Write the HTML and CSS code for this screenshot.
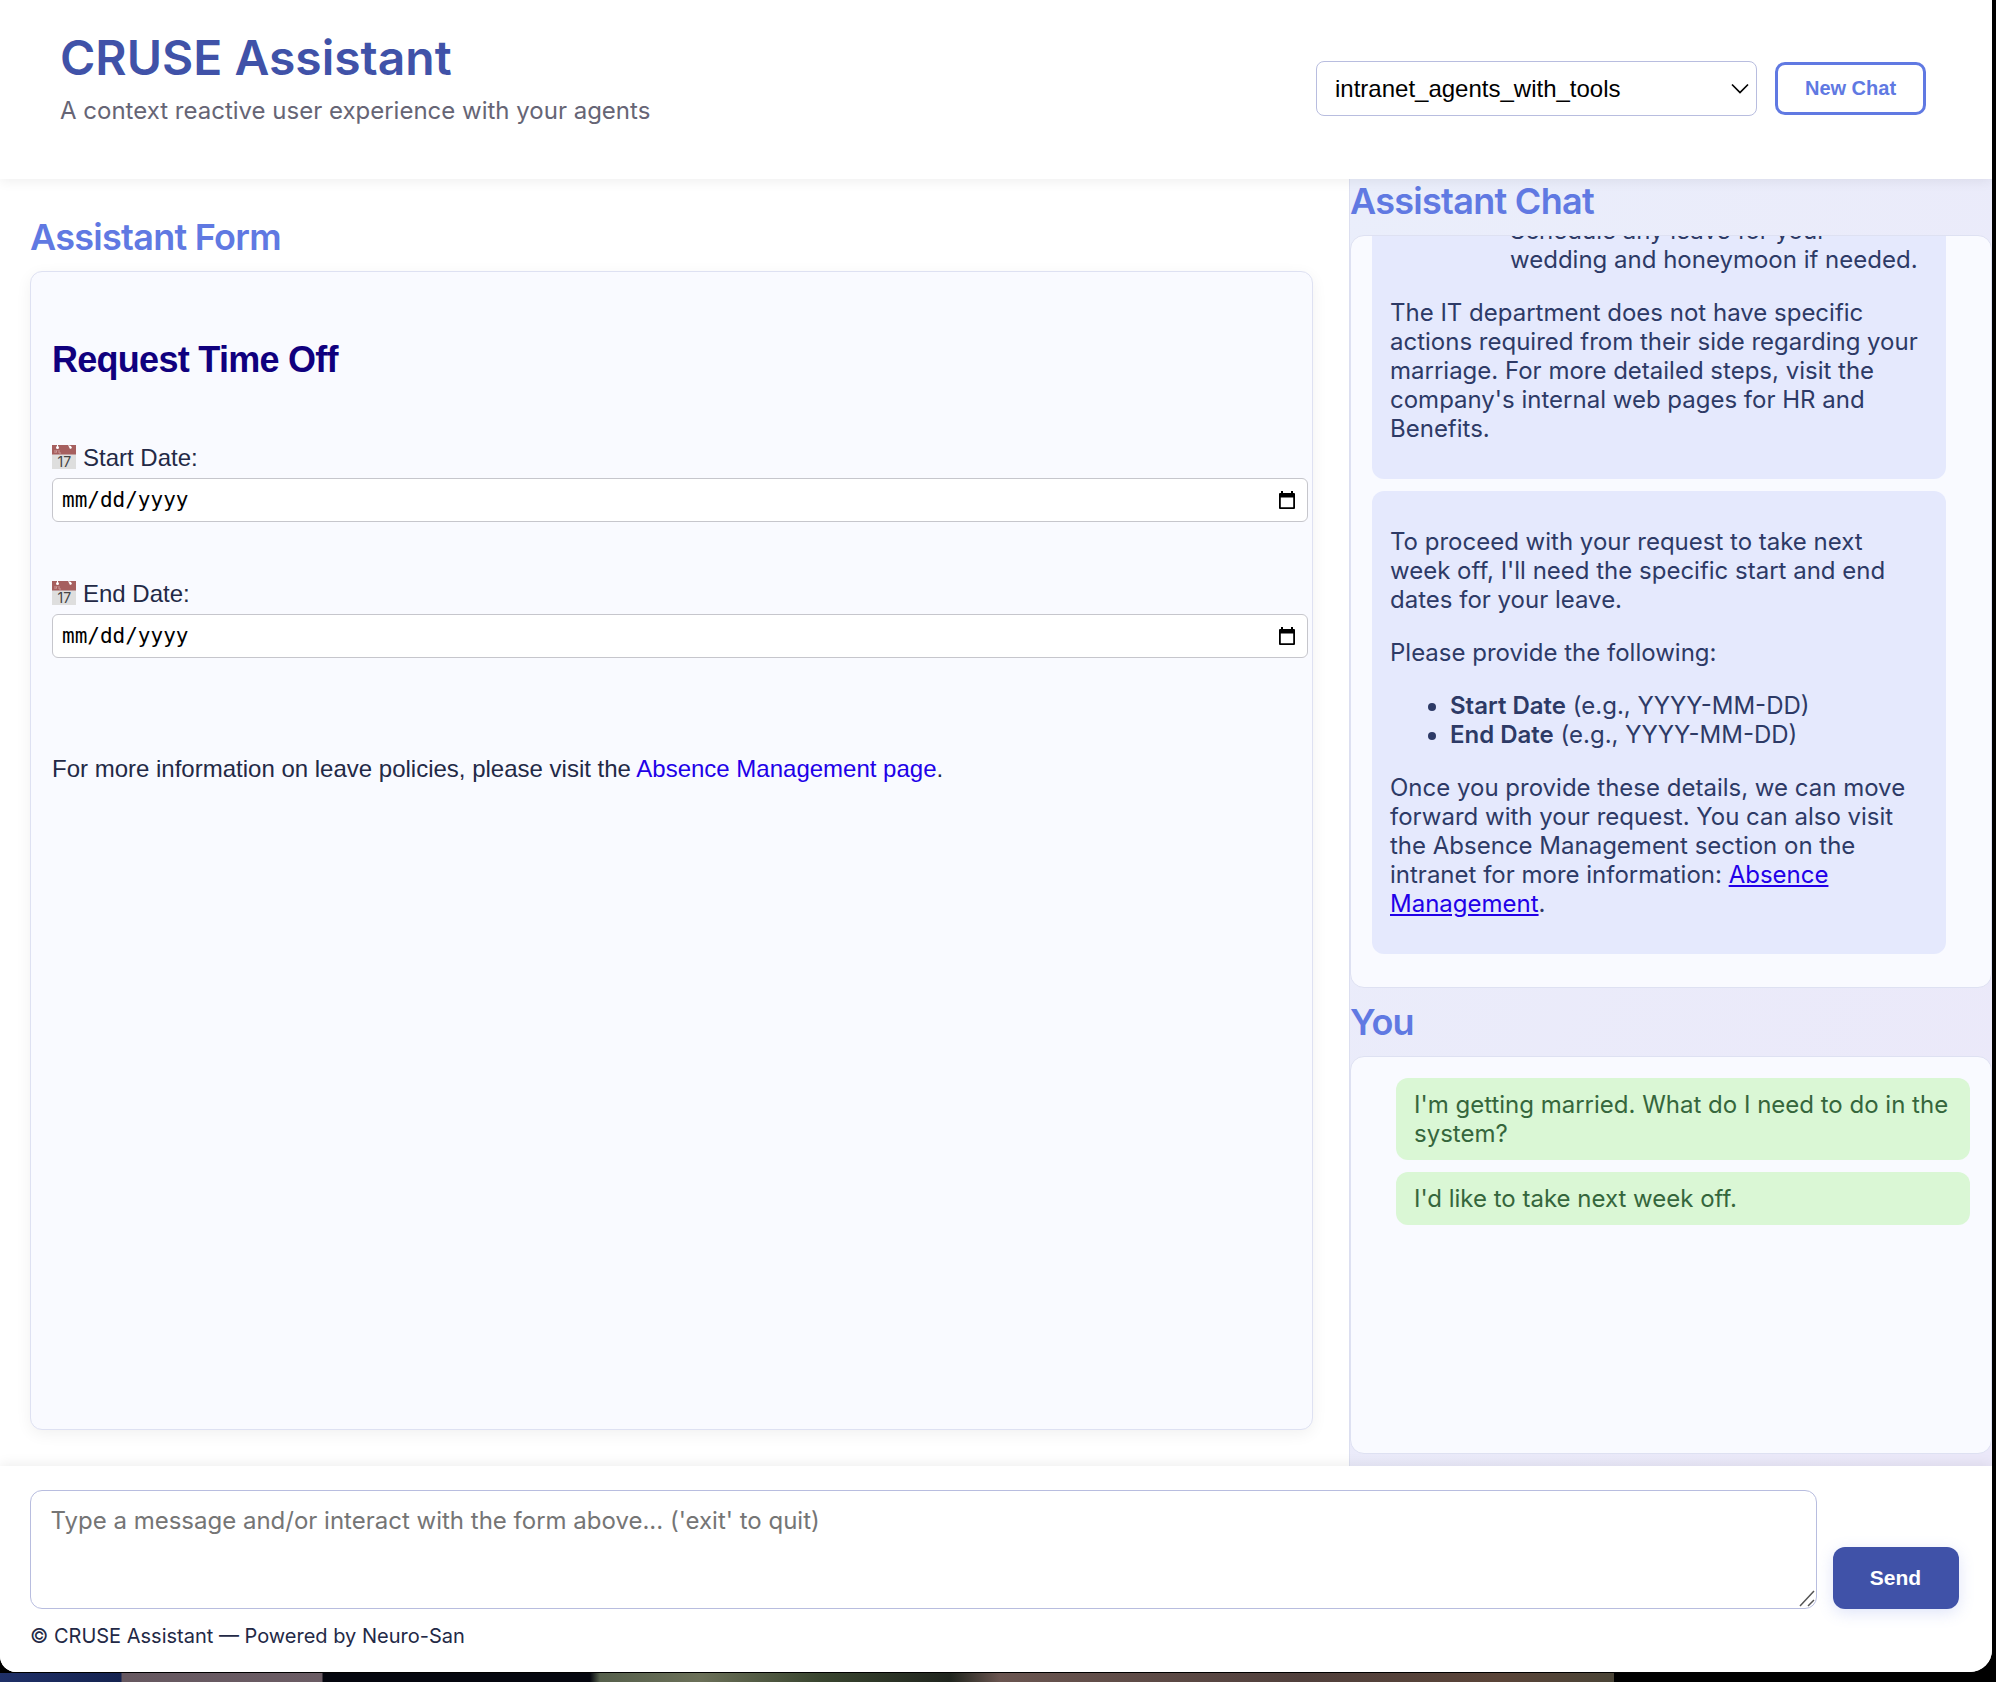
FILE: index.html
```html
<!DOCTYPE html>
<html lang="en">
<head>
<meta charset="utf-8">
<title>CRUSE Assistant</title>
<link rel="stylesheet" href="styles.css">
</head>
<body>
<div class="window">
  <header class="header">
    <div class="brand">
      <h1 class="title">CRUSE Assistant</h1>
      <p class="subtitle">A context reactive user experience with your agents</p>
    </div>
    <div class="controls">
      <div class="select"><span>intranet_agents_with_tools</span>
        <svg width="18" height="12" viewBox="0 0 18 12" fill="none" stroke="#000" stroke-width="1.700"><path d="M1 1.500 9 9.500 17 1.500"/></svg>
      </div>
      <button class="new-chat">New Chat</button>
    </div>
  </header>
  <main class="main">
    <section class="form-panel">
      <h2 class="heading">Assistant Form</h2>
      <div class="form-card">
        <h3 class="form-title">Request Time Off</h3>
        <div class="field">
          <div class="label"><svg class="cal" viewBox="0 0 24 24"><path fill="#dedede" d="M0 9h24v15H0z"/><path fill="#a65f5f" d="M0 0h24v9.500H0z"/><circle cx="5.500" cy="2.500" r="1.500" fill="#fff"/><path d="M5 0h1v2H5zM16 0l3 1 1 2-2 1z" fill="#fff"/><path d="M3 5v3M5 5l-1 3M7 5v3h2" stroke="#c99" fill="none"/><text x="12.300" y="21.500" text-anchor="middle" class="cal-day">17</text></svg><span>Start Date:</span></div>
          <div class="date"><span>mm/dd/yyyy</span><svg width="16" height="18" viewBox="0 0 16 18"><path d="M2 0h2v2h8V0h2v2h1q1 0 1 1v14q0 1-1 1H1q-1 0-1-1V3q0-1 1-1h1zM1.800 6.500v9.700h12.400V6.500z" fill-rule="evenodd"/></svg></div>
        </div>
        <div class="field">
          <div class="label"><svg class="cal" viewBox="0 0 24 24"><path fill="#dedede" d="M0 9h24v15H0z"/><path fill="#a65f5f" d="M0 0h24v9.500H0z"/><circle cx="5.500" cy="2.500" r="1.500" fill="#fff"/><path d="M5 0h1v2H5zM16 0l3 1 1 2-2 1z" fill="#fff"/><path d="M3 5v3M5 5l-1 3M7 5v3h2" stroke="#c99" fill="none"/><text x="12.300" y="21.500" text-anchor="middle" class="cal-day">17</text></svg><span>End Date:</span></div>
          <div class="date"><span>mm/dd/yyyy</span><svg width="16" height="18" viewBox="0 0 16 18"><path d="M2 0h2v2h8V0h2v2h1q1 0 1 1v14q0 1-1 1H1q-1 0-1-1V3q0-1 1-1h1zM1.800 6.500v9.700h12.400V6.500z" fill-rule="evenodd"/></svg></div>
        </div>
        <p class="info">For more information on leave policies, please visit the <a class="info-link">Absence Management page</a>.</p>
      </div>
    </section>
    <aside class="chat-panel">
      <h2 class="heading chat-heading">Assistant Chat</h2>
      <div class="box chat-box">
        <div class="bubble assistant">
          <ul><li class="plain"><ul><li>Schedule any leave for your wedding and honeymoon if needed.</li></ul></li></ul>
          <p>The IT department does not have specific actions required from their side regarding your marriage. For more detailed steps, visit the company's internal web pages for HR and Benefits.</p>
        </div>
        <div class="bubble assistant">
          <p>To proceed with your request to take next week off, I'll need the specific start and end dates for your leave.</p>
          <p>Please provide the following:</p>
          <ul><li><strong>Start Date</strong> (e.g., YYYY-MM-DD)</li><li><strong>End Date</strong> (e.g., YYYY-MM-DD)</li></ul>
          <p>Once you provide these details, we can move forward with your request. You can also visit the Absence Management section on the intranet for more information: <a class="link">Absence Management</a>.</p>
        </div>
      </div>
      <h2 class="heading you-heading">You</h2>
      <div class="box you-box">
        <div class="bubble user">I'm getting married. What do I need to do in the system?</div>
        <div class="bubble user">I'd like to take next week off.</div>
      </div>
    </aside>
  </main>
  <footer class="footer">
    <div class="composer">
      <div class="message"><span>Type a message and/or interact with the form above... ('exit' to quit)</span>
        <svg class="grip" width="16" height="20" viewBox="0 0 16 20" stroke="#555" stroke-width="1.500"><path d="M1 19 15 4M9 19l6-6"/></svg>
      </div>
      <button class="send">Send</button>
    </div>
    <p class="copyright">© CRUSE Assistant — Powered by Neuro-San</p>
  </footer>
</div>
<div class="wallpaper"></div>
</body>
</html>
```
FILE: styles.css
```css
* { box-sizing: border-box; }
body { margin: 0; width: 1996px; height: 1682px; overflow: hidden; background: #000; color: #232946; font-family: Inter, sans-serif; font-size: 24px; line-height: 29px; }
h1, h2, h3, p { margin: 0; }
button { font-family: "Liberation Sans", Arial, sans-serif; font-weight: 700; }
.window { width: 1992px; height: 1672px; background: #fff; border-radius: 0 0 22px 16px; overflow: hidden; display: flex; flex-direction: column; }
.header { height: 179px; flex: none; padding: 0 66px 0 60px; display: flex; justify-content: space-between; box-shadow: 0 2px 12px rgba(0,0,0,.07); position: relative; z-index: 1; background: #fff; }
.brand { padding-top: 29px; }
.title { font-size: 48px; line-height: 58px; font-weight: 600; color: #4052a8; }
.subtitle { margin-top: 9px; color: #666575; }
.controls { display: flex; align-items: center; gap: 18px; height: 177px; }
.select { width: 441px; height: 55px; border: 1px solid #b8bddf; border-radius: 8px; padding: 0 7px 0 18px; display: flex; align-items: center; justify-content: space-between; font-family: "Liberation Sans", Arial, sans-serif; color: #000; }
.new-chat { width: 151px; height: 53px; border: 3px solid #6079e2; border-radius: 10px; background: #fff; color: #6079e2; font-size: 20px; padding: 0; }
.main { height: 1286.500px; flex: none; display: flex; }
.form-panel { width: 1349px; padding: 36px 36px 0 30px; }
.heading { font-size: 36px; line-height: 44px; font-weight: 600; color: #6079e2; letter-spacing: -.72px; }
.form-card { margin-top: 12px; height: 1159px; border: 1px solid #dee1f2; border-radius: 12px; background: #f9faff; box-shadow: 0 4px 16px rgba(0,0,0,.06); padding: 67px 4px 0 21px; font-family: "Liberation Sans", Arial, sans-serif; }
.form-title { font-size: 36px; line-height: 42px; color: #10007e; letter-spacing: -.72px; }
.field { height: 136px; }
.form-title + .field { margin-top: 62px; }
.label { display: flex; gap: 7px; align-items: center; height: 28px; margin-bottom: 7px; }
.cal { width: 24px; height: 24px; }
.cal-day { font: 14px Inter, sans-serif; fill: #444; }
.date { height: 44px; border: 1px solid #c6c6cc; border-radius: 6px; background: #fff; color: #000; display: flex; align-items: center; justify-content: space-between; padding: 0 12px 0 9px; font: 21px "DejaVu Sans Mono", monospace; }
.info { margin-top: 39px; }
.info-link { color: #2100e8; }
.chat-panel { width: 643px; border-left: 1px solid #dcdff0; background: linear-gradient(120deg, #eaeefb, #ebe8f9); }
.chat-heading { margin-bottom: 12px; }
.box { border: 1px solid #dee1f2; border-radius: 14px; background: #f9faff; padding: 21px; display: flex; flex-direction: column; gap: 12px; overflow: hidden; }
.chat-box { height: 753px; justify-content: flex-end; padding-bottom: 33px; }
.bubble { width: 574px; flex: none; border-radius: 12px; padding: 12px 18px; }
.assistant { background: #e5e9fd; color: #2d3a66; }
.bubble p { margin: 24px 0; }
.bubble ul { margin: 24px 0; padding-left: 60px; }
.bubble ul ul { margin: 0; list-style: square; }
.plain { list-style: none; }
.bubble strong { font-weight: 600; }
.link { color: #2100e8; text-decoration: underline; }
.you-heading { margin: 12px 0; }
.you-box { height: 398px; align-items: flex-end; }
.user { background: #daf7d5; color: #35663c; }
.footer { flex: 1; position: relative; background: #fff; padding: 24px 33px 0 30px; box-shadow: 0 -2px 12px rgba(0,0,0,.07); }
.composer { display: flex; gap: 15.500px; align-items: flex-end; }
.message { position: relative; width: 1787px; height: 119px; border: 1px solid #b8bddf; border-radius: 12px; padding: 15px 19.500px; color: #757575; }
.grip { position: absolute; right: 1px; bottom: 1px; }
.send { width: 126px; height: 62px; border: 0; border-radius: 12px; background: #4052a8; color: #fff; font-size: 21px; box-shadow: 0 4px 16px rgba(96,121,226,.2); }
.copyright { margin-top: 14px; font-size: 20px; line-height: 26px; }
.wallpaper { width: 1614px; height: 9px; margin-top: 1px; background: linear-gradient(90deg, #1f3068 0, #152350 121px, #665860 122px, #6b5c64 322px, #05070f 323px, #05070f 590px, #56604c 600px, #6b7058 700px, #39452f 820px, #20251e 950px, #6a5550 1000px, #51403c 1300px, #5a4438 1500px, #4a4436 1614px); }
```
